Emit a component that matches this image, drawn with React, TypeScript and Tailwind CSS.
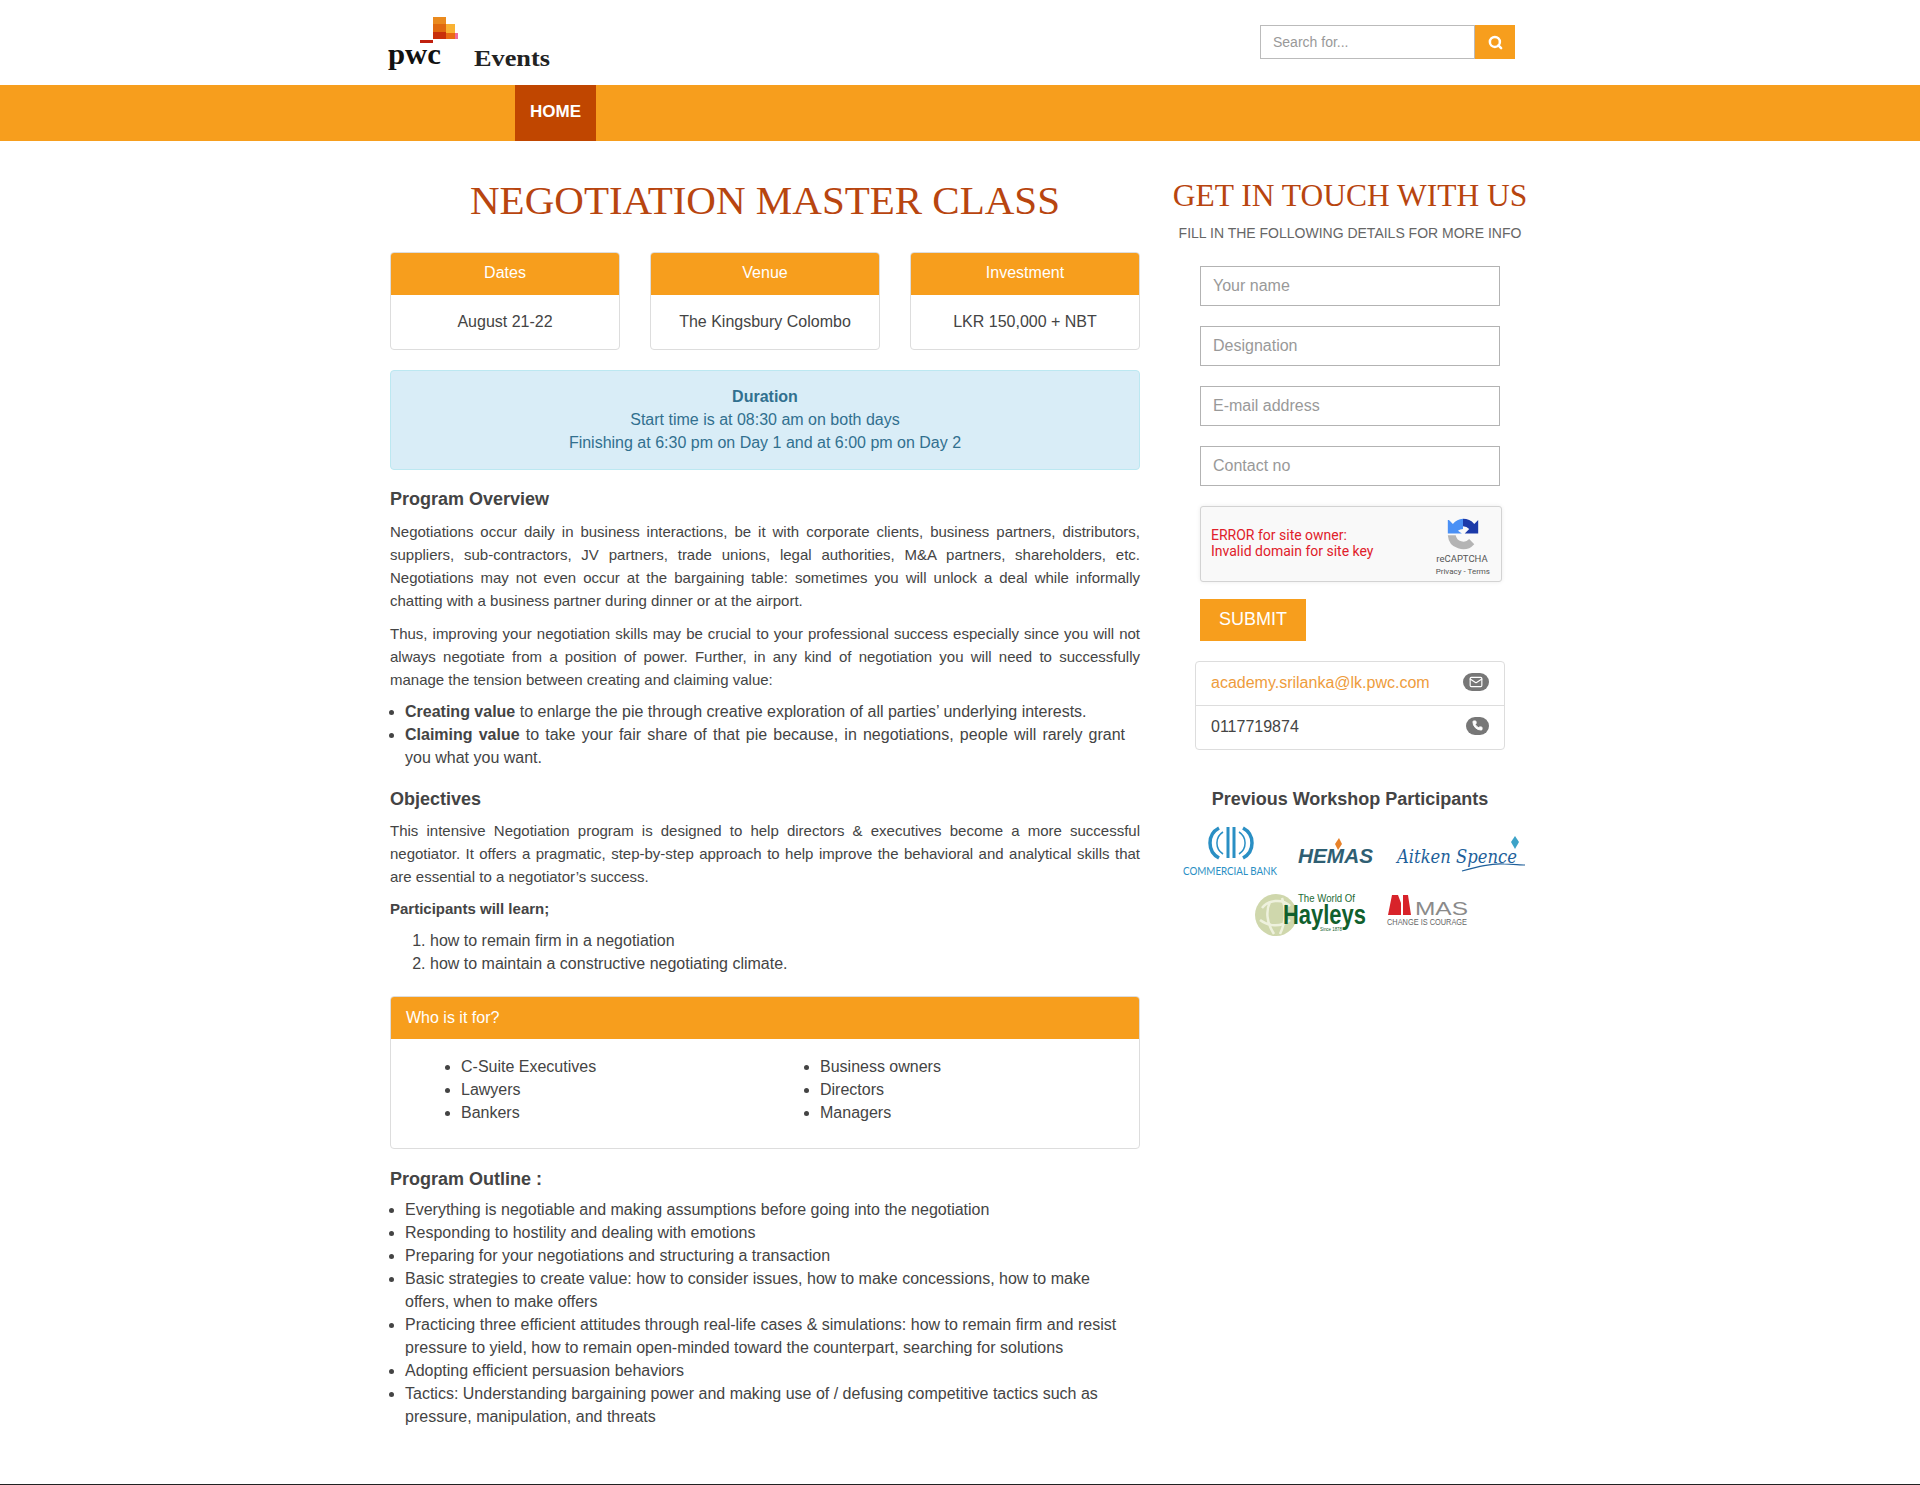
import React from "react";
import { Search, Mail, Phone } from "lucide-react";

const Card = ({ t, v }: { t: string; v: string }) => (
  <div className="w-[230px] h-[98px] rounded-[4px] border border-[#ddd] overflow-hidden">
    <div className="h-[42px] bg-[#f79e1d] text-white text-center leading-[40px]">{t}</div>
    <div className="text-center pt-[15px] leading-[23px]">{v}</div>
  </div>
);

const Input = ({ p }: { p: string }) => (
  <div className="h-10 w-[300px] border border-[#b3b3b3] px-3 leading-[38px] text-[#999]">{p}</div>
);

export default function App() {
  return (
    <div className="relative h-[1485px] bg-white text-[16px] text-[#444] font-['Liberation_Sans',Arial,sans-serif] overflow-hidden">
      <header className="h-[85px]">
        <div className="w-[1170px] mx-auto px-[15px] relative h-full flex justify-between">
          <div className="relative w-[200px]">
            <svg width="200" height="85" className="absolute left-0 top-0 overflow-visible">
              <rect x="30" y="40" width="13" height="3" fill="#c0200f" />
              <rect x="43" y="17" width="13" height="22" fill="#ea8a1e" />
              <rect x="43" y="24" width="13" height="8" fill="#e0690f" />
              <rect x="43" y="32" width="13" height="7" fill="#c9300a" />
              <rect x="56" y="24" width="9" height="15" fill="#f9b233" />
              <rect x="56" y="33" width="9" height="6" fill="#ea6a12" />
              <rect x="65" y="33" width="3" height="6" fill="#f06a9a" />
              <text x="-2" y="64" fontFamily="'Liberation Serif',serif" fontWeight="700" fontSize="30" fill="#111" textLength="53" lengthAdjust="spacingAndGlyphs">pwc</text>
              <text x="84" y="66" fontFamily="'Liberation Serif',serif" fontWeight="700" fontSize="24" fill="#222" textLength="76" lengthAdjust="spacingAndGlyphs">Events</text>
            </svg>
          </div>
          <div className="flex mt-[25px] h-[34px] absolute left-[885px]">
            <div className="w-[215px] h-[34px] border border-[#bbb] px-3 text-[14px] leading-[32px] text-[#999]">Search for...</div>
            <div className="w-[40px] h-[34px] bg-[#f79e1d] flex items-center justify-center">
              <Search size={15} strokeWidth={4} color="#fff" />
            </div>
          </div>
        </div>
      </header>
      <nav className="h-[56px] bg-[#f79e1d]">
        <div className="pl-[515px]">
          <div className="w-[81px] h-[56px] bg-[#c04600] text-white font-bold text-center leading-[54px] text-[17px]">HOME</div>
        </div>
      </nav>
      <div className="w-[1170px] mx-auto flex">
        <main className="w-[780px] px-[15px] pt-[31px]">
          <h1 className="text-center font-['Liberation_Serif',serif] text-[41px] leading-[56px] text-[#b8450f] mb-[24px] mt-0 whitespace-nowrap">NEGOTIATION MASTER CLASS</h1>
          <div className="flex justify-between">
            <Card t="Dates" v="August 21-22" />
            <Card t="Venue" v="The Kingsbury Colombo" />
            <Card t="Investment" v="LKR 150,000 + NBT" />
          </div>
          <div className="mt-[20px] h-[100px] rounded-[4px] border border-[#bce8f1] bg-[#d9edf7] text-[#31708f] text-center pt-[14px] leading-[23px]">
            <b>Duration</b>
            <br />Start time is at 08:30 am on both days
            <br />Finishing at 6:30 pm on Day 1 and at 6:00 pm on Day 2
          </div>
          <h3 className="mt-[18px] mb-[9px] text-[18px] leading-[23px] font-bold">Program Overview</h3>
          <p className="text-[15px] leading-[23px] text-justify mb-[10px]">Negotiations occur daily in business interactions, be it with corporate clients, business partners, distributors, suppliers, sub-contractors, JV partners, trade unions, legal authorities, M&amp;A partners, shareholders, etc. Negotiations may not even occur at the bargaining table: sometimes you will unlock a deal while informally chatting with a business partner during dinner or at the airport.</p>
          <p className="text-[15px] leading-[23px] text-justify mb-[9px]">Thus, improving your negotiation skills may be crucial to your professional success especially since you will not always negotiate from a position of power. Further, in any kind of negotiation you will need to successfully manage the tension between creating and claiming value:</p>
          <ul className="list-disc pl-[15px] pr-[15px] leading-[23px] text-justify">
            <li><b>Creating value</b> to enlarge the pie through creative exploration of all parties’ underlying interests.</li>
            <li><b>Claiming value</b> to take your fair share of that pie because, in negotiations, people will rarely grant you what you want.</li>
          </ul>
          <h3 className="mt-[19px] mb-[8px] text-[18px] leading-[23px] font-bold">Objectives</h3>
          <p className="text-[15px] leading-[23px] text-justify mb-[9px]">This intensive Negotiation program is designed to help directors &amp; executives become a more successful negotiator. It offers a pragmatic, step-by-step approach to help improve the behavioral and analytical skills that are essential to a negotiator’s success.</p>
          <p className="text-[15px] leading-[23px] font-bold mb-[9px]">Participants will learn;</p>
          <ol className="list-decimal pl-[40px] leading-[23px]">
            <li>how to remain firm in a negotiation</li>
            <li>how to maintain a constructive negotiating climate.</li>
          </ol>
          <div className="mt-[21px] h-[153px] rounded-[4px] border border-[#ddd] overflow-hidden">
            <div className="h-[42px] bg-[#f79e1d] text-white px-[15px] leading-[42px]">Who is it for?</div>
            <div className="flex pt-[16px] leading-[23px]">
              <ul className="list-disc pl-[70px] w-[429px]">
                <li>C-Suite Executives</li>
                <li>Lawyers</li>
                <li>Bankers</li>
              </ul>
              <ul className="list-disc pl-[0px]">
                <li>Business owners</li>
                <li>Directors</li>
                <li>Managers</li>
              </ul>
            </div>
          </div>
          <h3 className="mt-[19px] mb-[7px] text-[18px] leading-[23px] font-bold">Program Outline :</h3>
          <ul className="list-disc pl-[15px] pr-[15px] leading-[23px]">
            <li>Everything is negotiable and making assumptions before going into the negotiation</li>
            <li>Responding to hostility and dealing with emotions</li>
            <li>Preparing for your negotiations and structuring a transaction</li>
            <li>Basic strategies to create value: how to consider issues, how to make concessions, how to make offers, when to make offers</li>
            <li>Practicing three efficient attitudes through real-life cases &amp; simulations: how to remain firm and resist pressure to yield, how to remain open-minded toward the counterpart, searching for solutions</li>
            <li>Adopting efficient persuasion behaviors</li>
            <li>Tactics: Understanding bargaining power and making use of / defusing competitive tactics such as pressure, manipulation, and threats</li>
          </ul>
        </main>
        <aside className="w-[390px] px-[15px] pt-[37px] flex flex-col items-center">
          <h2 className="font-['Liberation_Serif',serif] text-[31.5px] leading-[36px] text-[#b8450f] text-center whitespace-nowrap m-0">GET IN TOUCH WITH US</h2>
          <div className="text-[14px] leading-[23px] text-[#666] mt-[8px] whitespace-nowrap">FILL IN THE FOLLOWING DETAILS FOR MORE INFO</div>
          <div className="flex flex-col gap-5 mt-[21px]">
            <Input p="Your name" />
            <Input p="Designation" />
            <Input p="E-mail address" />
            <Input p="Contact no" />
          </div>
          <div className="w-[302px] h-[76px] mt-[20px] ml-[2px] bg-[#f9f9f9] border border-[#d3d3d3] rounded-[3px] shadow-[0_0_4px_rgba(0,0,0,0.08)] relative font-['Roboto',sans-serif] text-[14px] leading-[16px] text-[#e0202a]">
            <div className="absolute left-[10px] top-[20px] whitespace-nowrap">ERROR for site owner:<br />Invalid domain for site key</div>
            <svg width="36" height="36" viewBox="0 0 64 64" className="absolute left-[244px] top-[9px]">
              <path d="M32 5a27 27 0 0 1 20 9l7-7v24H35l8-8a15 15 0 0 0-11-5Z" fill="#1c3aa9" />
              <path d="M7 7l7 7A27 27 0 0 1 32 5v18a15 15 0 0 0-9 3l7 5H5V7Z" fill="#4a90f5" />
              <path d="M5 34h14a14 14 0 0 0 24 7l9 9a27 27 0 0 1-47-16Z" fill="#b4b4b4" />
            </svg>
            <div className="absolute right-[9px] top-[46px] w-[60px] text-center text-[#555] text-[9.5px] leading-[12px] whitespace-nowrap">reCAPTCHA</div>
            <div className="absolute right-[11px] top-[60px] text-center text-[#555] text-[8px] leading-[10px] whitespace-nowrap">Privacy - Terms</div>
          </div>
          <div className="self-start ml-[30px] mt-[17px] w-[106px] h-[42px] bg-[#f79e1d] text-white text-[18px] text-center leading-[40px]">SUBMIT</div>
          <div className="self-start ml-[25px] mt-[20px] w-[310px] h-[89px] border border-[#ddd] rounded-[4px]">
            <div className="h-[44px] border-b border-[#ddd] flex items-center justify-between px-[15px] pb-[2px]">
              <span className="text-[#ee9c3c]">academy.srilanka@lk.pwc.com</span>
              <span className="w-[26px] h-[18px] mb-[2px] rounded-full bg-[#777] flex items-center justify-center"><Mail size={14} color="#fff" /></span>
            </div>
            <div className="h-[43px] flex items-center justify-between px-[15px] pb-[2px]">
              <span>0117719874</span>
              <span className="w-[23px] h-[18px] mb-[2px] rounded-full bg-[#777] flex items-center justify-center"><Phone size={11} color="#fff" fill="#fff" /></span>
            </div>
          </div>
          <h3 className="mt-[38px] mb-0 text-[18px] leading-[23px] font-bold text-center">Previous Workshop Participants</h3>
          <svg width="360" height="125" viewBox="0 0 360 125" className="mt-[9px]">
            {/* Commercial Bank */}
            <g fill="none" stroke="#2a8fc4">
              <path d="M49 8 a17 17 0 0 0 0 30" strokeWidth="3.5" />
              <path d="M73 8 a17 17 0 0 1 0 30" strokeWidth="3.5" />
              <path d="M58 7 v31 M64 7 v31" strokeWidth="3" />
              <path d="M53 12 a13 13 0 0 0 0 22" strokeWidth="1.5" />
              <path d="M69 12 a13 13 0 0 1 0 22" strokeWidth="1.5" />
            </g>
            <text x="13" y="55" fontFamily="'Lato','Liberation Sans',sans-serif" fontSize="11" fill="#2a8fc4" textLength="94" lengthAdjust="spacingAndGlyphs">COMMERCIAL BANK</text>
            {/* Hemas */}
            <path d="M165 24l4-6 3 6-4 6Z" fill="#e8822a" />
            <text x="128" y="43" fontFamily="'Liberation Sans',sans-serif" fontWeight="700" fontStyle="italic" fontSize="21" fill="#2f5f73" textLength="75" lengthAdjust="spacingAndGlyphs">HEMAS</text>
            {/* Aitken Spence */}
            <text x="227" y="43" fontFamily="'DejaVu Serif',serif" fontStyle="italic" fontSize="19" fill="#1e5f9a" textLength="120" lengthAdjust="spacingAndGlyphs">Aitken Spence</text>
            <path d="M341 22l4-6 4 6-4 7Z" fill="#3da3c8" />
            <path d="M292 51c15-4 30-8 42-7 8 0 16 1 21 1" fill="none" stroke="#1e5f9a" strokeWidth="1.2" />
            {/* Hayleys */}
            <circle cx="106" cy="95" r="21" fill="#cfd7ac" />
            <path d="M92 88c6-8 20-10 28-2M90 100c8 6 20 8 30 0M100 82c-4 8-4 20 4 32M112 78c4 10 4 24-2 36" fill="none" stroke="#eef1dd" strokeWidth="2.5" />
            <text x="128" y="82" fontFamily="'Liberation Sans',sans-serif" fontSize="11.5" fill="#1d6b35" textLength="57" lengthAdjust="spacingAndGlyphs">The World Of</text>
            <text x="113" y="104" fontFamily="'Liberation Sans',sans-serif" fontWeight="700" fontSize="27" fill="#11602d" textLength="83" lengthAdjust="spacingAndGlyphs">Hayleys</text>
            <text x="150" y="111" fontFamily="'Liberation Sans',sans-serif" fontSize="5.5" fill="#11602d" textLength="22" lengthAdjust="spacingAndGlyphs">Since 1878</text>
            {/* MAS */}
            <path d="M218 95l4-20h6l3 8v12ZM233 75h5l3 20h-8Z" fill="#d8232a" />
            <text x="245" y="95" fontFamily="'Liberation Sans',sans-serif" fontSize="18" fill="#8a8a8a" textLength="53" lengthAdjust="spacingAndGlyphs">MAS</text>
            <text x="217" y="105" fontFamily="'Liberation Sans',sans-serif" fontSize="9" fill="#666" textLength="80" lengthAdjust="spacingAndGlyphs">CHANGE IS COURAGE</text>
          </svg>
        </aside>
      </div>
      <div className="absolute left-0 right-0 bottom-0 h-px bg-[#222]" />
    </div>
  );
}
